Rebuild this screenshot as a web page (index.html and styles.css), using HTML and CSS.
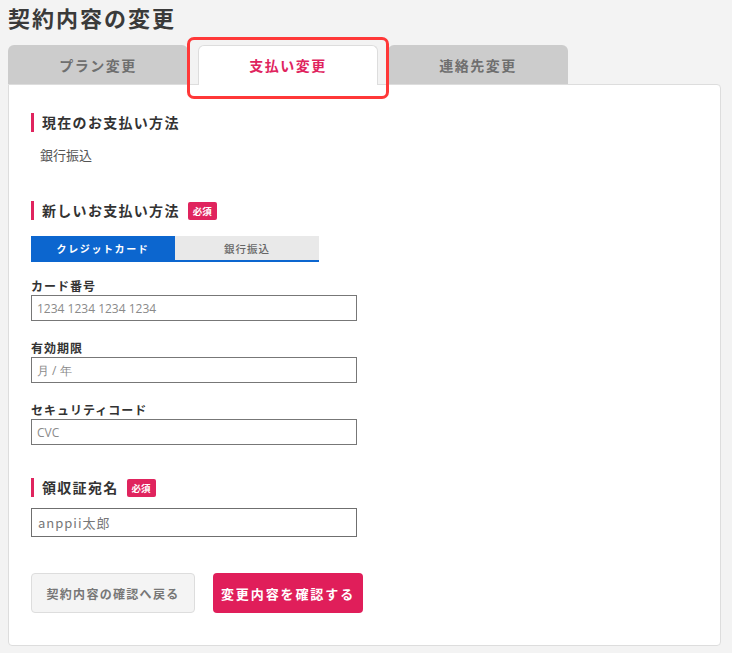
FILE: index.html
```html
<!DOCTYPE html>
<html lang="ja">
<head>
    <meta charset="UTF-8">
    <meta name="viewport" content="width=device-width, initial-scale=1.0">
    <title>契約内容の変更</title>
    <link rel="stylesheet" href="styles.css">
</head>
<body>
    <h1 class="page-title">契約内容の変更</h1>

    <div class="tabs">
        <a class="tab" href="#">プラン変更</a>
        <a class="tab active" href="#">支払い変更<span class="tab-mark"></span></a>
        <a class="tab" href="#">連絡先変更</a>
    </div>

    <div class="panel">
        <h2 class="sec-title">現在のお支払い方法</h2>
        <p class="current">銀行振込</p>

        <h2 class="sec-title sec-new">新しいお支払い方法<span class="badge">必須</span></h2>
        <div class="pay-switch">
            <span class="pay-option active">クレジットカード</span>
            <span class="pay-option">銀行振込</span>
        </div>

        <div class="card-fields">
            <div class="field">
                <label for="card_number">カード番号</label>
                <input type="text" id="card_number" placeholder="1234 1234 1234 1234">
            </div>
            <div class="field">
                <label for="card_exp">有効期限</label>
                <input type="text" id="card_exp" placeholder="月 / 年">
            </div>
            <div class="field">
                <label for="card_cvc">セキュリティコード</label>
                <input type="text" id="card_cvc" placeholder="CVC">
            </div>
        </div>

        <h2 class="sec-title sec-receipt">領収証宛名<span class="badge">必須</span></h2>
        <input type="text" class="name-input" value="anppii太郎">

        <div class="actions">
            <button type="button" class="btn-back">契約内容の確認へ戻る</button>
            <button type="button" class="btn-confirm">変更内容を確認する</button>
        </div>
    </div>
</body>
</html>
```

FILE: styles.css
```css
/* 全体 */
* {
    box-sizing: border-box;
}

body {
    margin: 0;
    padding: 0 11px 0 8px;
    background-color: #f3f3f3;
    color: #333;
    font-family: "Noto Sans CJK JP", "Noto Sans", sans-serif;
}

.page-title {
    margin: 0;
    font-size: 22px;
    line-height: 34px;
    font-weight: 700;
    letter-spacing: 2px;
    color: #3a3a3a;
}

/* タブ */
.tabs {
    display: flex;
    align-items: flex-end;
    gap: 10px;
    margin-top: 11px;
}

.tab {
    position: relative;
    width: 180px;
    height: 39px;
    display: flex;
    align-items: center;
    justify-content: center;
    background-color: #ccc;
    border-radius: 6px 6px 0 0;
    color: #6f6f6f;
    font-size: 14px;
    font-weight: 700;
    letter-spacing: 1.5px;
    text-decoration: none;
}

.tab.active {
    height: 40px;
    margin-bottom: -1px;
    padding-bottom: 2px;
    background-color: #fff;
    border: 1px solid #ddd;
    border-bottom: none;
    color: #e0245e;
    z-index: 1;
}

/* 赤枠の注釈 */
.tab-mark {
    position: absolute;
    top: -9px;
    left: -12px;
    right: -12px;
    bottom: -14px;
    border: 3px solid #ff3838;
    border-radius: 7px;
}

/* パネル */
.panel {
    background-color: #fff;
    border: 1px solid #ddd;
    border-radius: 0 4px 4px 4px;
    padding: 28px 22px 32px;
}

.sec-title {
    display: flex;
    align-items: center;
    height: 19px;
    margin: 0;
    padding-left: 8px;
    border-left: 3px solid #e0245e;
    font-size: 14px;
    line-height: 19px;
    font-weight: 700;
    letter-spacing: 1.3px;
    color: #333;
}

.sec-new {
    margin-top: 36px;
}

.sec-receipt {
    margin-top: 33px;
}

.badge {
    margin-left: 8px;
    padding: 0 5px;
    height: 18px;
    line-height: 18px;
    background-color: #e0245e;
    color: #fff;
    font-size: 9.5px;
    font-weight: 700;
    letter-spacing: 0;
    border-radius: 2px;
}

.current {
    margin: 13px 0 0;
    padding-left: 9px;
    font-size: 13px;
    line-height: 20px;
    color: #555;
}

/* 支払い方法の切り替え */
.pay-switch {
    display: flex;
    width: 288px;
    margin-top: 16px;
    border-bottom: 2px solid #0c66cf;
}

.pay-option {
    flex: 1;
    height: 24px;
    display: flex;
    align-items: center;
    justify-content: center;
    background-color: #e9e9e9;
    color: #666;
    font-size: 10.5px;
    letter-spacing: 1px;
    font-weight: 500;
}

.pay-option.active {
    background-color: #0c66cf;
    color: #fff;
    font-size: 10px;
    font-weight: 700;
    letter-spacing: 1.6px;
}

/* カード入力 */
.card-fields {
    margin-top: 16px;
}

.field + .field {
    margin-top: 19px;
}

.field label {
    display: block;
    margin-bottom: 1px;
    font-size: 12px;
    line-height: 16px;
    font-weight: 700;
    letter-spacing: 1px;
    color: #333;
}

.field input, .name-input {
    display: block;
    width: 326px;
    height: 26px;
    padding: 0 5px;
    border: 1px solid #777;
    border-radius: 0;
    background-color: #fff;
    color: #333;
    font-family: "Open Sans", sans-serif;
    font-size: 12px;
}

.field input::placeholder {
    color: #8a8a8a;
}

.name-input {
    height: 29px;
    margin-top: 11px;
    padding: 0 6px;
    border-color: #6f6f6f;
    font-family: "Noto Sans CJK JP", sans-serif;
    font-size: 13px;
    letter-spacing: 1px;
    color: #777;
}

/* ボタン */
.actions {
    display: flex;
    gap: 18px;
    margin-top: 36px;
}

.btn-back, .btn-confirm {
    height: 40px;
    border-radius: 4px;
    font-family: "Noto Sans CJK JP", sans-serif;
    font-weight: 700;
    cursor: pointer;
}

.btn-back {
    width: 164px;
    background-color: #f4f4f4;
    border: 1px solid #ddd;
    color: #777;
    font-size: 12px;
    letter-spacing: 1.3px;
}

.btn-confirm {
    width: 150px;
    background-color: #e01e5a;
    border: none;
    color: #fff;
    font-size: 13px;
    letter-spacing: 1.9px;
}
```
